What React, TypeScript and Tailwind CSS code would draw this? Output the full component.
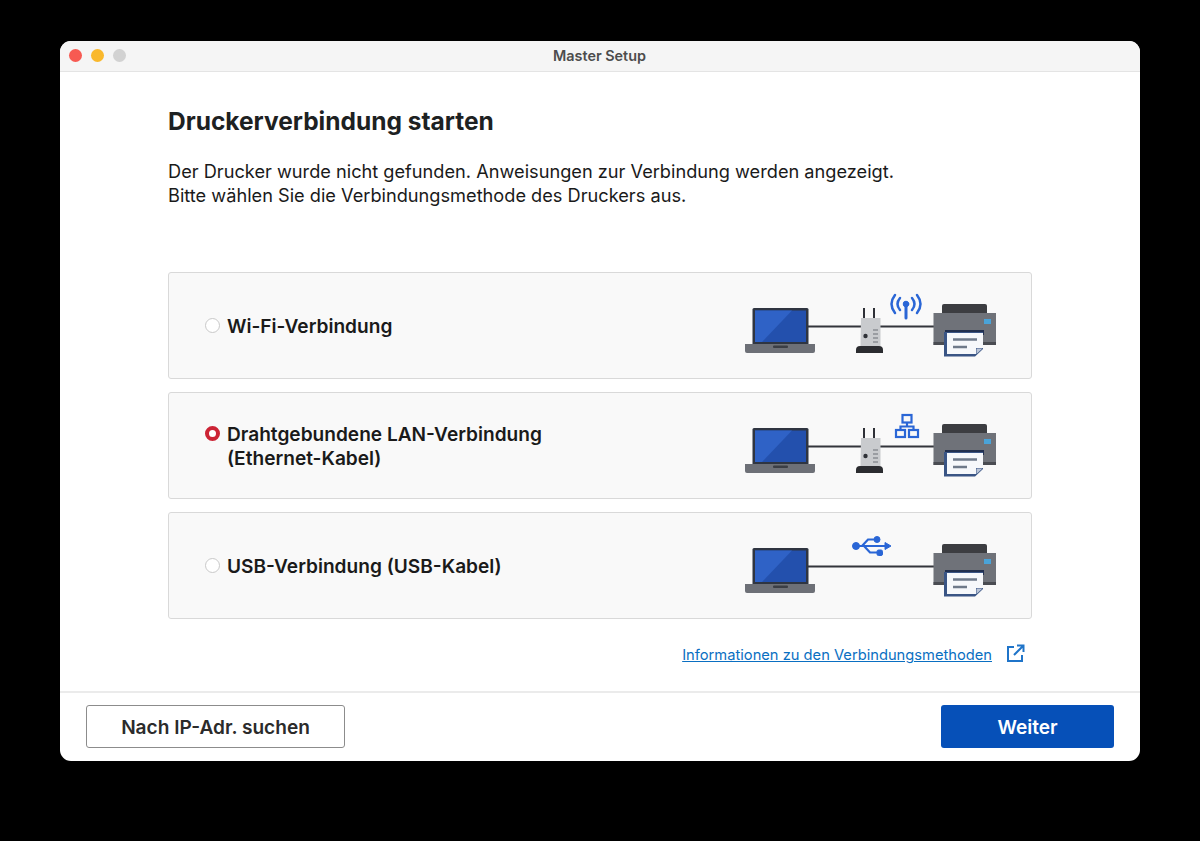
const FONT = "font-['Inter','Liberation_Sans',sans-serif]";

function Laptop() {
  return (
    <g>
      <rect x="17.5" y="23" width="56" height="37" rx="1.5" fill="#2f3541" />
      <rect x="20" y="25.500" width="51" height="31.500" fill="#2350ad" />
      <path d="M20 25.500h37L27 57h-7z" fill="#2f62c6" />
      <path d="M10 59h70v7a2 2 0 0 1-2 2H12a2 2 0 0 1-2-2z" fill="#6d7077" />
      <rect x="38" y="60.500" width="15" height="2.500" rx="1" fill="#3b3e45" />
    </g>
  );
}

function Printer() {
  return (
    <g>
      <path d="M207 28v-7a2 2 0 0 1 2-2h41a2 2 0 0 1 2 2v7z" fill="#3c3d41" />
      <path d="M198.500 28h62.500v32h-62.500z" fill="#6f7279" />
      <rect x="198.500" y="57" width="62.500" height="3" fill="#4a4c52" />
      <rect x="249" y="34" width="7" height="5" fill="#4aa3d8" />
      <rect x="210" y="45" width="39" height="5" fill="#22304f" />
      <path d="M209 47h39v17l-8 7.500h-31z" fill="#3a5585" />
      <path d="M212 48h36v15h-7v6h-29z" fill="#f6f8fb" />
      <path d="M241.500 63.500h6l-6 5.500z" fill="#b9c4d6" />
      <path d="M218 54.500h24M218 62h14" stroke="#6f7a8a" strokeWidth="2.500" fill="none" />
    </g>
  );
}

function Router() {
  return (
    <g>
      <path d="M129 23v11M139 23v11" stroke="#2f3137" strokeWidth="2" fill="none" />
      <path d="M126 33h19.500v28H125.500z" fill="#c9cbce" />
      <circle cx="130.500" cy="51" r="2.200" fill="#2f3137" />
      <path d="M138 45h5M138 49h5M138 53h5M138 57h5" stroke="#8b8e94" strokeWidth="1.500" fill="none" />
      <path d="M121 68v-3a4 4 0 0 1 4-4h19a4 4 0 0 1 4 4v3z" fill="#2b2c30" />
    </g>
  );
}

function Diagram({ kind }: { kind: "wifi" | "lan" | "usb" }) {
  return (
    <svg width="275" height="80" viewBox="0 1 275 80" className="shrink-0">
      <path d="M73 41.500h127" stroke="#33353b" strokeWidth="2" fill="none" />
      <Laptop />
      {kind !== "usb" && <Router />}
      <Printer />
      {kind === "wifi" && (
        <g stroke="#2a66d6" fill="none" strokeLinecap="round">
          <path d="M171 18v15" strokeWidth="3" />
          <circle cx="171" cy="19" r="2.800" fill="#2a66d6" strokeWidth="1" />
          <path d="M165 13Q160 19 165 25M177 13Q182 19 177 25" strokeWidth="2.500" />
          <path d="M160 10Q153 19 160 28M182 10Q189 19 182 28" strokeWidth="2.500" />
        </g>
      )}
      {kind === "lan" && (
        <g stroke="#2a66d6" fill="none" strokeWidth="2.200">
          <rect x="167.500" y="10" width="9" height="7.500" />
          <path d="M172 17.500v4M165.500 25v-3.500h13V25" />
          <rect x="161" y="25" width="9" height="7" />
          <rect x="174" y="25" width="9" height="7" />
        </g>
      )}
      {kind === "usb" && (
        <g fill="#2a66d6" stroke="#2a66d6">
          <circle cx="121" cy="21" r="3.500" />
          <path d="M121 21h33" strokeWidth="2.200" fill="none" />
          <path d="M156 21l-6-3.500v7z" />
          <path d="M127 21l6-6.500h7M129 21l6 6.500h7" strokeWidth="2.200" fill="none" />
          <circle cx="142" cy="14.500" r="3" />
          <rect x="142" y="25" width="5.500" height="5.500" rx="1.500" />
        </g>
      )}
    </svg>
  );
}

function Radio({ selected }: { selected?: boolean }) {
  if (selected) {
    return <span className="w-[15px] h-[15px] rounded-full bg-white border-[4px] border-[#cc2435] shrink-0" />;
  }
  return <span className="w-[15px] h-[15px] rounded-full bg-white border border-[#c9c9c9] shrink-0" />;
}

function Option({
  label,
  sub,
  selected,
  kind,
}: {
  label: string;
  sub?: string;
  selected?: boolean;
  kind: "wifi" | "lan" | "usb";
}) {
  return (
    <div className="h-[107px] flex items-center justify-between pl-[36px] pr-[21px] bg-[#f9f9f9] border border-[#d9d9d9] rounded-[3px]">
      <div className="flex items-start gap-[7px]">
        <span className="h-[24px] flex items-center">
          <Radio selected={selected} />
        </span>
        <div className="text-[19.100px] leading-[24px] font-semibold text-[#1a1a1a]">
          <div>{label}</div>
          {sub && <div>{sub}</div>}
        </div>
      </div>
      <Diagram kind={kind} />
    </div>
  );
}

export default function App() {
  return (
    <div className={`w-[1200px] h-[841px] bg-black pt-[41px] pl-[60px] ${FONT}`}>
      <div className="w-[1080px] h-[720px] bg-white rounded-[11px] overflow-hidden flex flex-col">
        {/* Title bar */}
        <div className="relative h-[31px] shrink-0 bg-[#f5f5f5] border-b border-[#e4e4e4] flex items-center justify-center">
          <div className="absolute left-[9px] top-[8px] flex gap-[9px]">
            <span className="w-[13px] h-[13px] rounded-full bg-[#f75a52]" />
            <span className="w-[13px] h-[13px] rounded-full bg-[#f9b82c]" />
            <span className="w-[13px] h-[13px] rounded-full bg-[#d2d2d2]" />
          </div>
          <span className="-ml-[1px] text-[14.400px] font-semibold text-[#4c4c4c]">Master Setup</span>
        </div>

        {/* Content */}
        <div className="flex-1 px-[108px] pt-[32px]">
          <h1 className="text-[24.500px] leading-[34px] font-bold text-[#1d2122]">Druckerverbindung starten</h1>
          <p className="mt-[21px] text-[18.200px] leading-[24px] text-[#1a1a1a]">
            Der Drucker wurde nicht gefunden. Anweisungen zur Verbindung werden angezeigt.
            <br />
            Bitte wählen Sie die Verbindungsmethode des Druckers aus.
          </p>
          <div className="mt-[65px] flex flex-col gap-[13px]">
            <Option label="Wi-Fi-Verbindung" kind="wifi" />
            <Option label="Drahtgebundene LAN-Verbindung" sub="(Ethernet-Kabel)" selected kind="lan" />
            <Option label="USB-Verbindung (USB-Kabel)" kind="usb" />
          </div>
          <div className="mt-[24px] pr-[7px] flex items-center justify-end gap-[14px]">
            <a className="text-[14.700px] leading-[24px] text-[#0a6fc2] underline">
              Informationen zu den Verbindungsmethoden
            </a>
            <svg width="19" height="19" viewBox="0 0 19 19" fill="none" stroke="#1f74c9" strokeWidth="2" className="-mt-[3px]">
              <path d="M8 3H2v14h14v-6" />
              <path d="M8 11l9-9M11 1.500h6.500V8" />
            </svg>
          </div>
        </div>

        {/* Footer */}
        <div className="h-[70px] shrink-0 border-t-2 border-[#ebebeb] px-[26px] pb-[2px] flex items-center justify-between">
          <button className="w-[259px] h-[43px] pt-[2px] bg-white border border-[#8c8c8c] rounded-[3px] text-[19.100px] font-semibold text-[#2b2b2b]">
            Nach IP-Adr. suchen
          </button>
          <button className="w-[173px] h-[43px] pt-[2px] bg-[#0650b8] rounded-[3px] text-[19.100px] font-semibold text-white">
            Weiter
          </button>
        </div>
      </div>
    </div>
  );
}
